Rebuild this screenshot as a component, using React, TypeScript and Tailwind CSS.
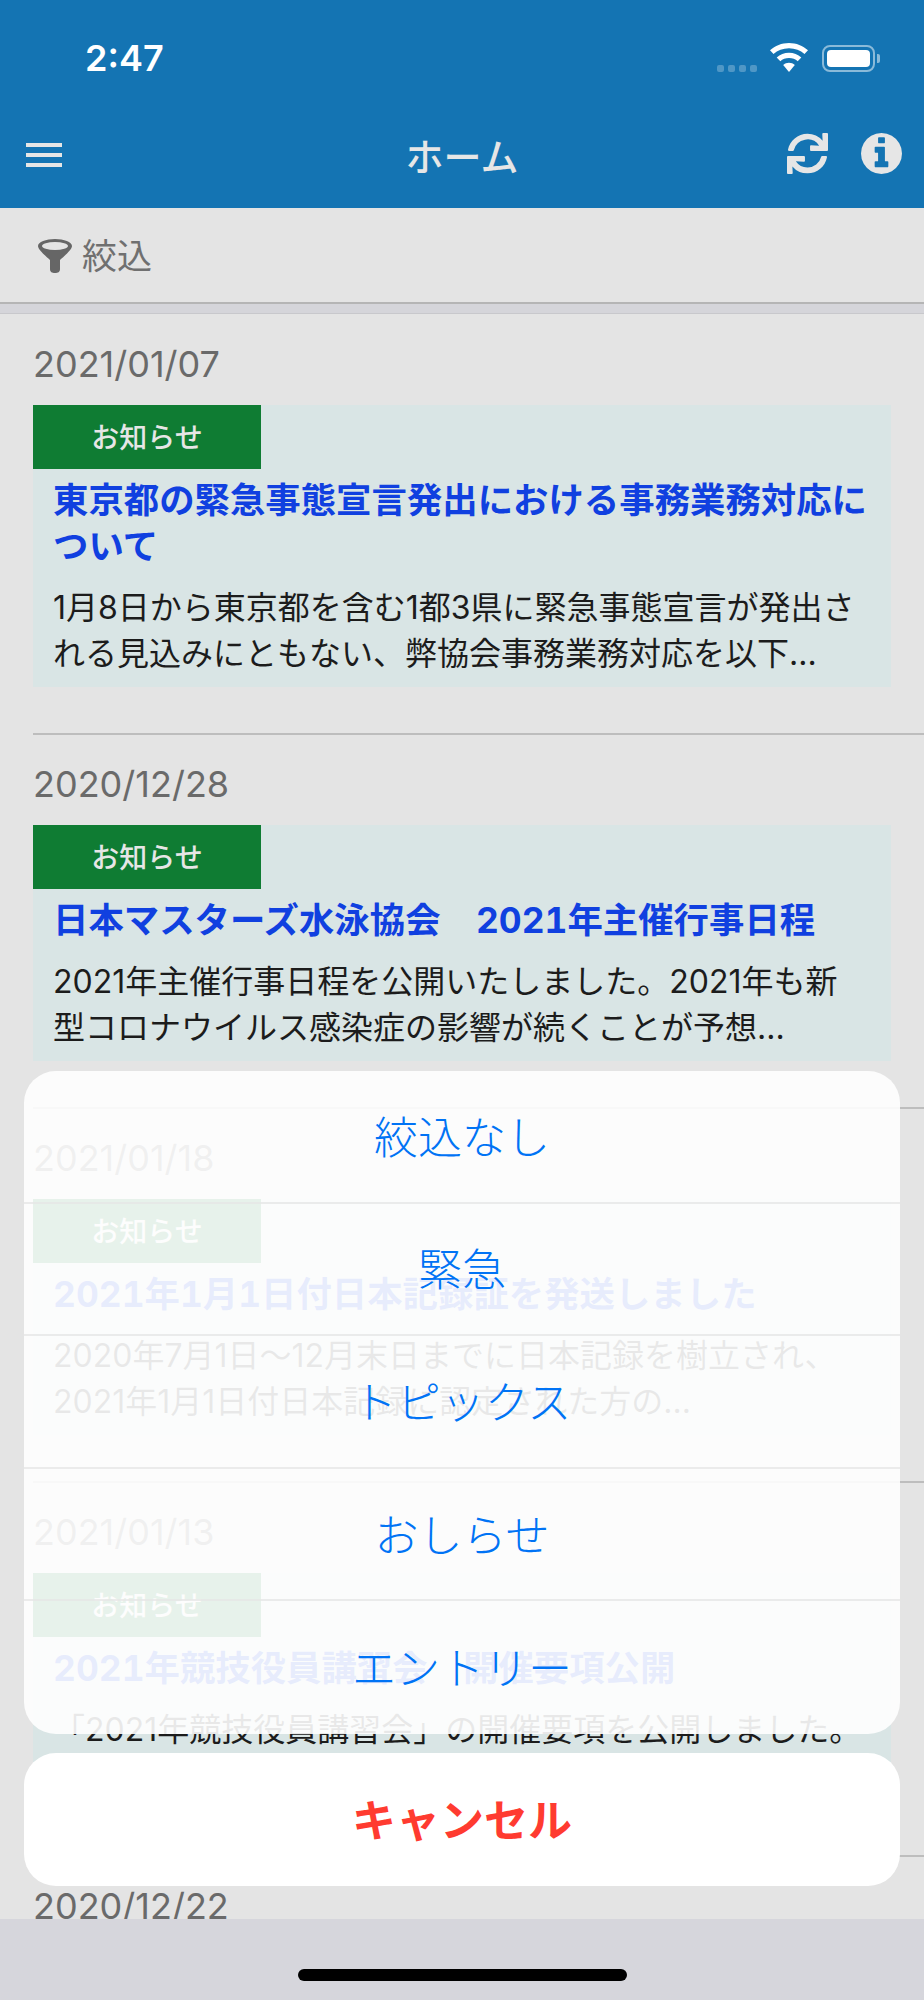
import { FaSync } from "react-icons/fa";

const font = { fontFamily: 'Inter, "Noto Sans CJK JP", sans-serif' };

type Item = {
    date: string;
    title: string[];
    body: string[];
};

const items: Item[] = [
    {
        date: "2021/01/07",
        title: ["東京都の緊急事態宣言発出における事務業務対応に", "ついて"],
        body: [
            "1月8日から東京都を含む1都3県に緊急事態宣言が発出さ",
            "れる見込みにともない、弊協会事務業務対応を以下...",
        ],
    },
    {
        date: "2020/12/28",
        title: ["日本マスターズ水泳協会　2021年主催行事日程"],
        body: [
            "2021年主催行事日程を公開いたしました。2021年も新",
            "型コロナウイルス感染症の影響が続くことが予想...",
        ],
    },
    {
        date: "2021/01/18",
        title: ["2021年1月1日付日本記録証を発送しました"],
        body: [
            "2020年7月1日～12月末日までに日本記録を樹立され、",
            "2021年1月1日付日本記録に認定された方の...",
        ],
    },
    {
        date: "2021/01/13",
        title: ["2021年競技役員講習会　開催要項公開"],
        body: [
            "「2021年競技役員講習会」の開催要項を公開しました。",
            "開催要項をご確認の上、お申し込みください...",
        ],
    },
];

const options = ["絞込なし", "緊急", "トピックス", "おしらせ", "エントリー"];

function NewsItem({ item, first }: { item: Item; first: boolean }) {
    return (
        <div className="pl-[33px]">
            <div
                className={
                    first
                        ? "flex h-[91px] items-start pt-[29px] text-[36px] leading-[42px] text-[#6a6a6a]"
                        : "flex h-[90px] items-start pt-[28px] text-[36px] leading-[42px] text-[#6a6a6a]"
                }
            >
                {item.date}
            </div>
            <div className="mr-[33px] bg-[#d9e5e5] pb-[10px]">
                <div className="flex h-[64px] w-[228px] items-center justify-center bg-[#0f7c33] pt-[1px] text-[28px] font-medium text-[#e6e6e6]">
                    お知らせ
                </div>
                <div className="px-5 pt-[9px] text-[35.4px] leading-[46px] font-bold text-[#1040e0] tabular-nums">
                    {item.title.map((line) => (
                        <div key={line} className="whitespace-nowrap">{line}</div>
                    ))}
                </div>
                <div className="px-5 pt-[15px] text-[32px] leading-[46px] text-[#1c1c1c]">
                    {item.body.map((line) => (
                        <div key={line} className="whitespace-nowrap">{line}</div>
                    ))}
                </div>
            </div>
            <div className="mt-[46px] h-[2px] bg-[#bdbdbd]" />
        </div>
    );
}

export default function App() {
    return (
        <div className="relative h-[2000px] w-[924px] overflow-hidden bg-[#e4e4e4]" style={font}>
            {/* Status + nav */}
            <div className="h-[208px] bg-[#1474b3]">
                <div className="flex h-[116px] items-start justify-between pt-[37px] pl-[85px] pr-[44px]">
                    <span className="text-[36px] leading-[42px] font-semibold text-white">2:47</span>
                    <div className="mt-[6px] flex h-[29px] items-end">
                        <div className="flex gap-[4px]">
                            <span className="h-[7px] w-[7px] rounded-[2px] bg-white/25" />
                            <span className="h-[7px] w-[7px] rounded-[2px] bg-white/25" />
                            <span className="h-[7px] w-[7px] rounded-[2px] bg-white/25" />
                            <span className="h-[7px] w-[7px] rounded-[2px] bg-white/25" />
                        </div>
                        <svg className="ml-[13px]" width="38" height="29" viewBox="0 0 38 29">
                            <path d="M19 0c7.300 0 13.900 2.800 19 7.300l-3.500 3.700C30.400 7.400 25 5.300 19 5.300S7.600 7.400 3.500 11L0 7.300C5.100 2.800 11.700 0 19 0z" fill="#fff" />
                            <path d="M19 9.800c4.700 0 9 1.800 12.300 4.700l-3.600 3.800c-2.300-2-5.300-3.200-8.700-3.200s-6.400 1.200-8.700 3.200l-3.600-3.800C10 11.600 14.300 9.800 19 9.800z" fill="#fff" />
                            <path d="M19 19.800c2.200 0 4.200.8 5.800 2.100L19 29l-5.800-7.100c1.600-1.300 3.600-2.100 5.800-2.100z" fill="#fff" />
                        </svg>
                        <div className="ml-[14px] flex items-center gap-[2px]">
                            <div className="flex h-[27px] w-[53px] items-center rounded-[8px] border-2 border-white/50 p-[3px]">
                                <div className="h-full w-full rounded-[4px] bg-white" />
                            </div>
                            <span className="h-[9px] w-[3px] rounded-r-[2px] bg-white/50" />
                        </div>
                    </div>
                </div>
                <div className="relative flex h-[92px] items-start justify-between pl-[26px] pr-[22px] pt-[17px]">
                    <div className="mt-[10px] flex w-[36px] flex-col gap-[6px]">
                        <span className="h-[4px] bg-[#e6e6e6]" />
                        <span className="h-[4px] bg-[#e6e6e6]" />
                        <span className="h-[4px] bg-[#e6e6e6]" />
                    </div>
                    <span className="absolute top-[19px] left-0 w-full text-center text-[38px] leading-[44px] font-medium text-[#e6e6e6]">
                        ホーム
                    </span>
                    <div className="flex items-center gap-[33px]">
                        <FaSync className="text-[41px] text-[#e6e6e6]" />
                        <svg width="41" height="41" viewBox="128 128 1536 1536">
                            <path
                                fillRule="evenodd"
                                fill="#e6e6e6"
                                d="M1152 1376v-160q0-14-9-23t-23-9h-96v-512q0-14-9-23t-23-9h-320q-14 0-23 9t-9 23v160q0 14 9 23t23 9h96v320h-96q-14 0-23 9t-9 23v160q0 14 9 23t23 9h448q14 0 23-9t9-23zm-128-896v-160q0-14-9-23t-23-9h-192q-14 0-23 9t-9 23v160q0 14 9 23t23 9h192q14 0 23-9t9-23zm640 416q0 209-103 385.500t-279.500 279.500-385.500 103-385.500-103-279.500-279.500-103-385.500 103-385.500 279.500-279.500 385.500-103 385.500 103 279.500 279.500 103 385.500z"
                            />
                        </svg>
                    </div>
                </div>
            </div>

            {/* Filter bar */}
            <div className="flex h-[94px] items-center gap-[10px] pt-[2px] pl-[38px] text-[35px] text-[#707070]">
                <svg width="34" height="34" viewBox="0 0 34 34">
                    <path d="M0 7C0 3 8 0 17 0s17 3 17 7c0 4-9 11-12 14v9c0 3-2 4-5 4s-5-1-5-4v-9C9 18 0 11 0 7z" fill="#666" />
                    <ellipse cx="17" cy="7" rx="13" ry="4" fill="#e4e4e4" />
                </svg>
                <span>絞込</span>
            </div>
            <div className="h-[12px] border-t-2 border-b border-t-[#b5b5b5] border-b-[#c8c8cc] bg-[#d5d5da]" />

            {/* List */}
            {items.map((item, i) => (
                <NewsItem key={item.date} item={item} first={i === 0} />
            ))}
            <div className="pl-[33px] pt-[28px] text-[36px] leading-[42px] text-[#6a6a6a]">2020/12/22</div>

            {/* Home bar */}
            <div className="absolute right-0 bottom-0 left-0 flex h-[81px] items-start justify-center bg-[#d6d6dc] pt-[50px]">
                <div className="h-[12px] w-[329px] rounded-full bg-black" />
            </div>

            {/* Action sheet */}
            <div className="absolute top-[1071px] left-[24px] w-[876px]">
                <div className="flex h-[663px] flex-col overflow-hidden rounded-[32px] bg-white/90">
                    {options.map((label, i) => (
                        <div
                            key={label}
                            className={
                                i === options.length - 1
                                    ? "flex h-[133px] items-center justify-center pt-[3px] text-[44px] font-light text-[#0073f5]"
                                    : "flex h-[133px] items-center justify-center border-b-2 border-[#e6e6e6]/80 pt-[3px] text-[44px] font-light text-[#0073f5]"
                            }
                        >
                            {label}
                        </div>
                    ))}
                </div>
                <div className="mt-[19px] flex h-[133px] items-center justify-center rounded-[32px] bg-white pt-[2px] text-[44px] font-bold text-[#ff3b30]">
                    キャンセル
                </div>
            </div>
        </div>
    );
}
